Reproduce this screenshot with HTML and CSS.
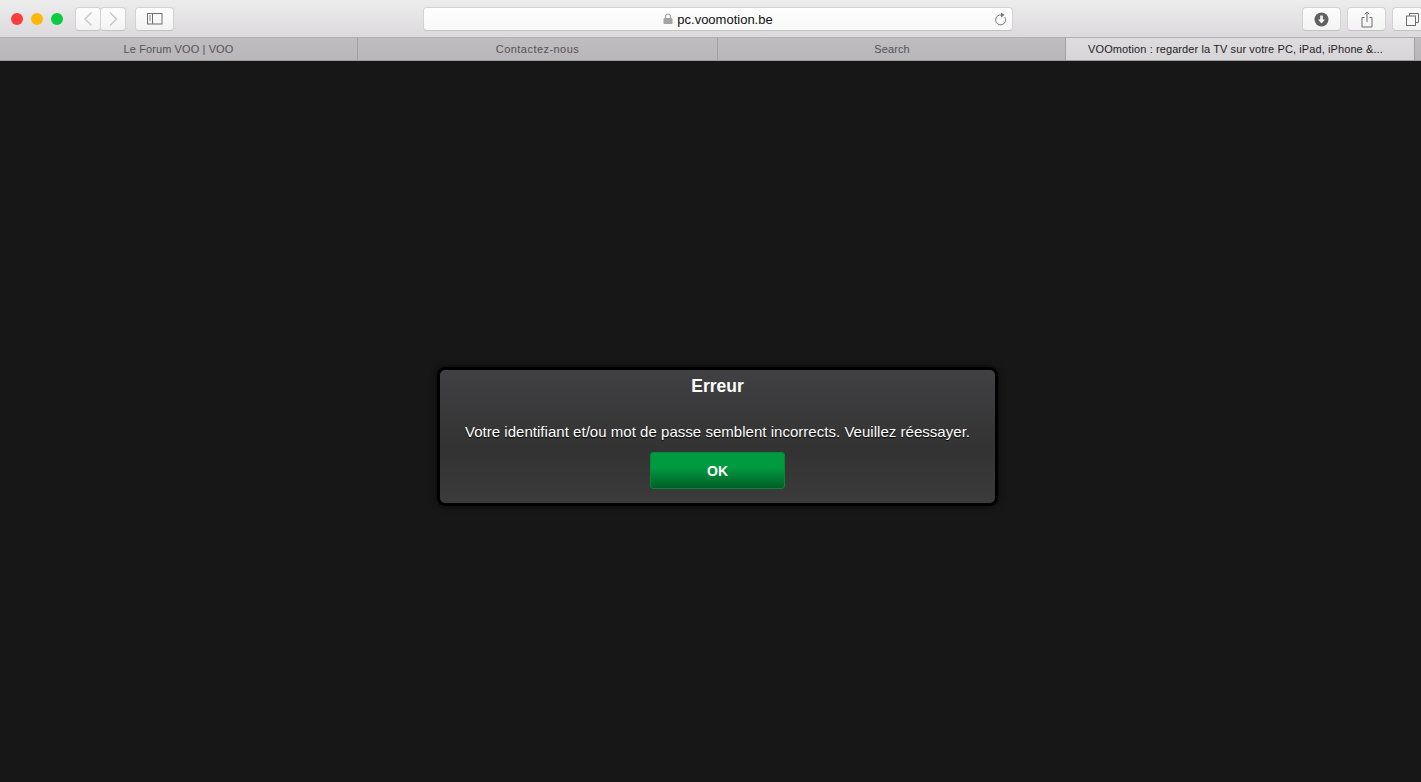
FILE: index.html
```html
<!DOCTYPE html>
<html lang="fr">
<head>
<meta charset="utf-8">
<title>VOOmotion</title>
<link rel="stylesheet" href="styles.css">
</head>
<body>
<header class="toolbar">
  <div class="lights">
    <span class="light red"></span>
    <span class="light yellow"></span>
    <span class="light green"></span>
  </div>
  <div class="nav">
    <button class="tb nav-btn"><svg width="12" height="16" viewBox="0 0 12 16"><path d="M9.500 1.500 3 8l6.500 6.500" fill="none" stroke="#c4c4c4" stroke-width="1.300"/></svg></button>
    <button class="tb nav-btn"><svg width="12" height="16" viewBox="0 0 12 16"><path d="M3 1.500 9.500 8 3 14.500" fill="none" stroke="#c4c4c4" stroke-width="1.300"/></svg></button>
  </div>
  <button class="tb side-btn"><svg width="16" height="12" viewBox="0 0 16 12"><rect x=".5" y=".5" width="14.500" height="10.500" fill="none" stroke="#6e6e6e"/><path d="M5.500 .5v10.500" stroke="#6e6e6e"/><path d="M2 3h2M2 5h2M2 7h2" stroke="#8a8a8a"/></svg></button>
  <div class="address">
    <span class="url"><svg class="lock" width="10" height="11" viewBox="0 0 10 11"><path d="M2.500 5V3.500a2.500 2.500 0 0 1 5 0V5" fill="none" stroke="#a3a3a3" stroke-width="1.200"/><rect x=".5" y="5" width="9" height="6" rx="1" fill="#a3a3a3"/></svg>pc.voomotion.be</span>
    <svg class="reload" width="13" height="14" viewBox="0 0 13 14"><path d="M10.800 5.200A5 5 0 1 1 7.500 3" fill="none" stroke="#777" stroke-width="1"/><path d="M7 .5 10.500 3 7 5.500z" fill="#777"/></svg>
  </div>
  <div class="right-tools">
    <button class="tb side-btn"><svg width="15" height="15" viewBox="0 0 15 15"><circle cx="7.500" cy="7.500" r="7" fill="#606060"/><path d="M6.200 3.500h2.600v4h2.200L7.500 11.500 4 7.500h2.200z" fill="#f6f6f6"/></svg></button>
    <button class="tb side-btn"><svg width="12" height="17" viewBox="0 0 12 17"><path d="M3.500 6.500H1v9.500h10V6.500H8.500M6 11V1M3.700 3.200 6 1l2.300 2.200" fill="none" stroke="#6e6e6e"/></svg></button>
    <button class="tb side-btn"><svg class="copy" width="13" height="13" viewBox="0 0 13 13"><path d="M3.500 3V.5h9v9H10" fill="none" stroke="#6e6e6e"/><rect x=".5" y="3" width="9" height="9.500" fill="none" stroke="#6e6e6e"/></svg></button>
  </div>
</header>
<nav class="tabs">
  <div class="tab t1">Le Forum VOO | VOO</div>
  <div class="tab t2">Contactez-nous</div>
  <div class="tab t3">Search</div>
  <div class="tab t4 active">VOOmotion : regarder la TV sur votre PC, iPad, iPhone &amp;...</div>
</nav>
<main class="page">
  <section class="dialog">
    <h1 class="title">Erreur</h1>
    <p class="message">Votre identifiant et/ou mot de passe semblent incorrects. Veuillez réessayer.</p>
    <button class="ok">OK</button>
  </section>
</main>
</body>
</html>
```
FILE: styles.css
```css
* { box-sizing: border-box; }
html, body { margin: 0; height: 100%; overflow: hidden; }
body { background: #171717; font-family: "Liberation Sans", Arial, sans-serif; }

.toolbar {
  height: 38px;
  display: flex;
  align-items: center;
  padding: 1px 0 0 11px;
  background: linear-gradient(#eeedee, #dbd9db);
  border-bottom: 1px solid #b1afb1;
  overflow: hidden;
}
.lights { display: flex; gap: 8px; margin-right: 12px; flex: none; }
.light { width: 12px; height: 12px; border-radius: 50%; }
.red { background: #fc3d3d; }
.yellow { background: #fdb90b; }
.green { background: #0ccb3f; }

.tb {
  height: 24px;
  padding: 0;
  display: flex;
  align-items: center;
  justify-content: center;
  flex: none;
  background: linear-gradient(#fdfdfd, #f3f3f3);
  border: 1px solid #d3d2d3;
  border-bottom-color: #c4c3c4;
  border-radius: 4px;
}
.nav { display: flex; margin-right: 9px; flex: none; }
.nav-btn { width: 26px; }
.nav-btn + .nav-btn { margin-left: -1px; }
.side-btn { width: 39px; }
.copy { margin-left: 1px; }

.address {
  flex: none;
  width: 590px;
  height: 24px;
  margin-left: 249px;
  position: relative;
  display: flex;
  align-items: center;
  justify-content: center;
  background: linear-gradient(#ffffff, #f8f8f8);
  border: 1px solid #d3d2d3;
  border-bottom-color: #c4c3c4;
  border-radius: 4px;
}
.url { display: flex; align-items: center; gap: 4px; font-size: 13px; color: #111; margin-left: 0; }
.lock { flex: none; margin-top: -1px; }
.reload { position: absolute; right: 5px; top: 4px; }
.right-tools { display: flex; gap: 6px; margin-left: 289px; flex: none; }

.tabs {
  height: 23px;
  display: flex;
  background: linear-gradient(#bfbdbf, #b8b6b8);
  border-bottom: 1px solid #9d9b9d;
  font-size: 11px;
  letter-spacing: 0.1px;
  color: #555357;
}
.tab {
  flex: none;
  height: 22px;
  line-height: 23px;
  text-align: center;
  border-right: 1px solid #a3a1a3;
}
.t1 { width: 358px; }
.t2 { width: 360px; letter-spacing: .45px; }
.t3 { width: 348px; padding-left: 1px; }
.t4 { width: 349px; padding-right: 9px; }
.active { background: linear-gradient(#dedcde, #d7d5d7); color: #1e1e1e; }

.page { padding: 306px 0 0 437px; }
.dialog {
  width: 561px;
  height: 139px;
  padding-top: 6px;
  display: flex;
  flex-direction: column;
  align-items: center;
  color: #fff;
  background: linear-gradient(#414043 0, #333333 60%, #3b3b3b 100%);
  border: 3px solid #000;
  border-radius: 8px;
  box-shadow: 0 0 6px rgba(0, 0, 0, .7);
}
.title { margin: 0; font-size: 17.500px; line-height: 20px; font-weight: 700; }
.message { margin: 27px 0 0; font-size: 15px; letter-spacing: .03px; line-height: 18px; text-shadow: 0 1px 1px #000; }
.ok {
  width: 135px;
  height: 37px;
  margin-top: 11px;
  color: #fff;
  font: 700 14px "Liberation Sans", Arial, sans-serif;
  background: linear-gradient(#009b40 0, #009b40 40%, #005f27 100%);
  border: 1px solid #008a3a;
  border-radius: 3px;
}
```
